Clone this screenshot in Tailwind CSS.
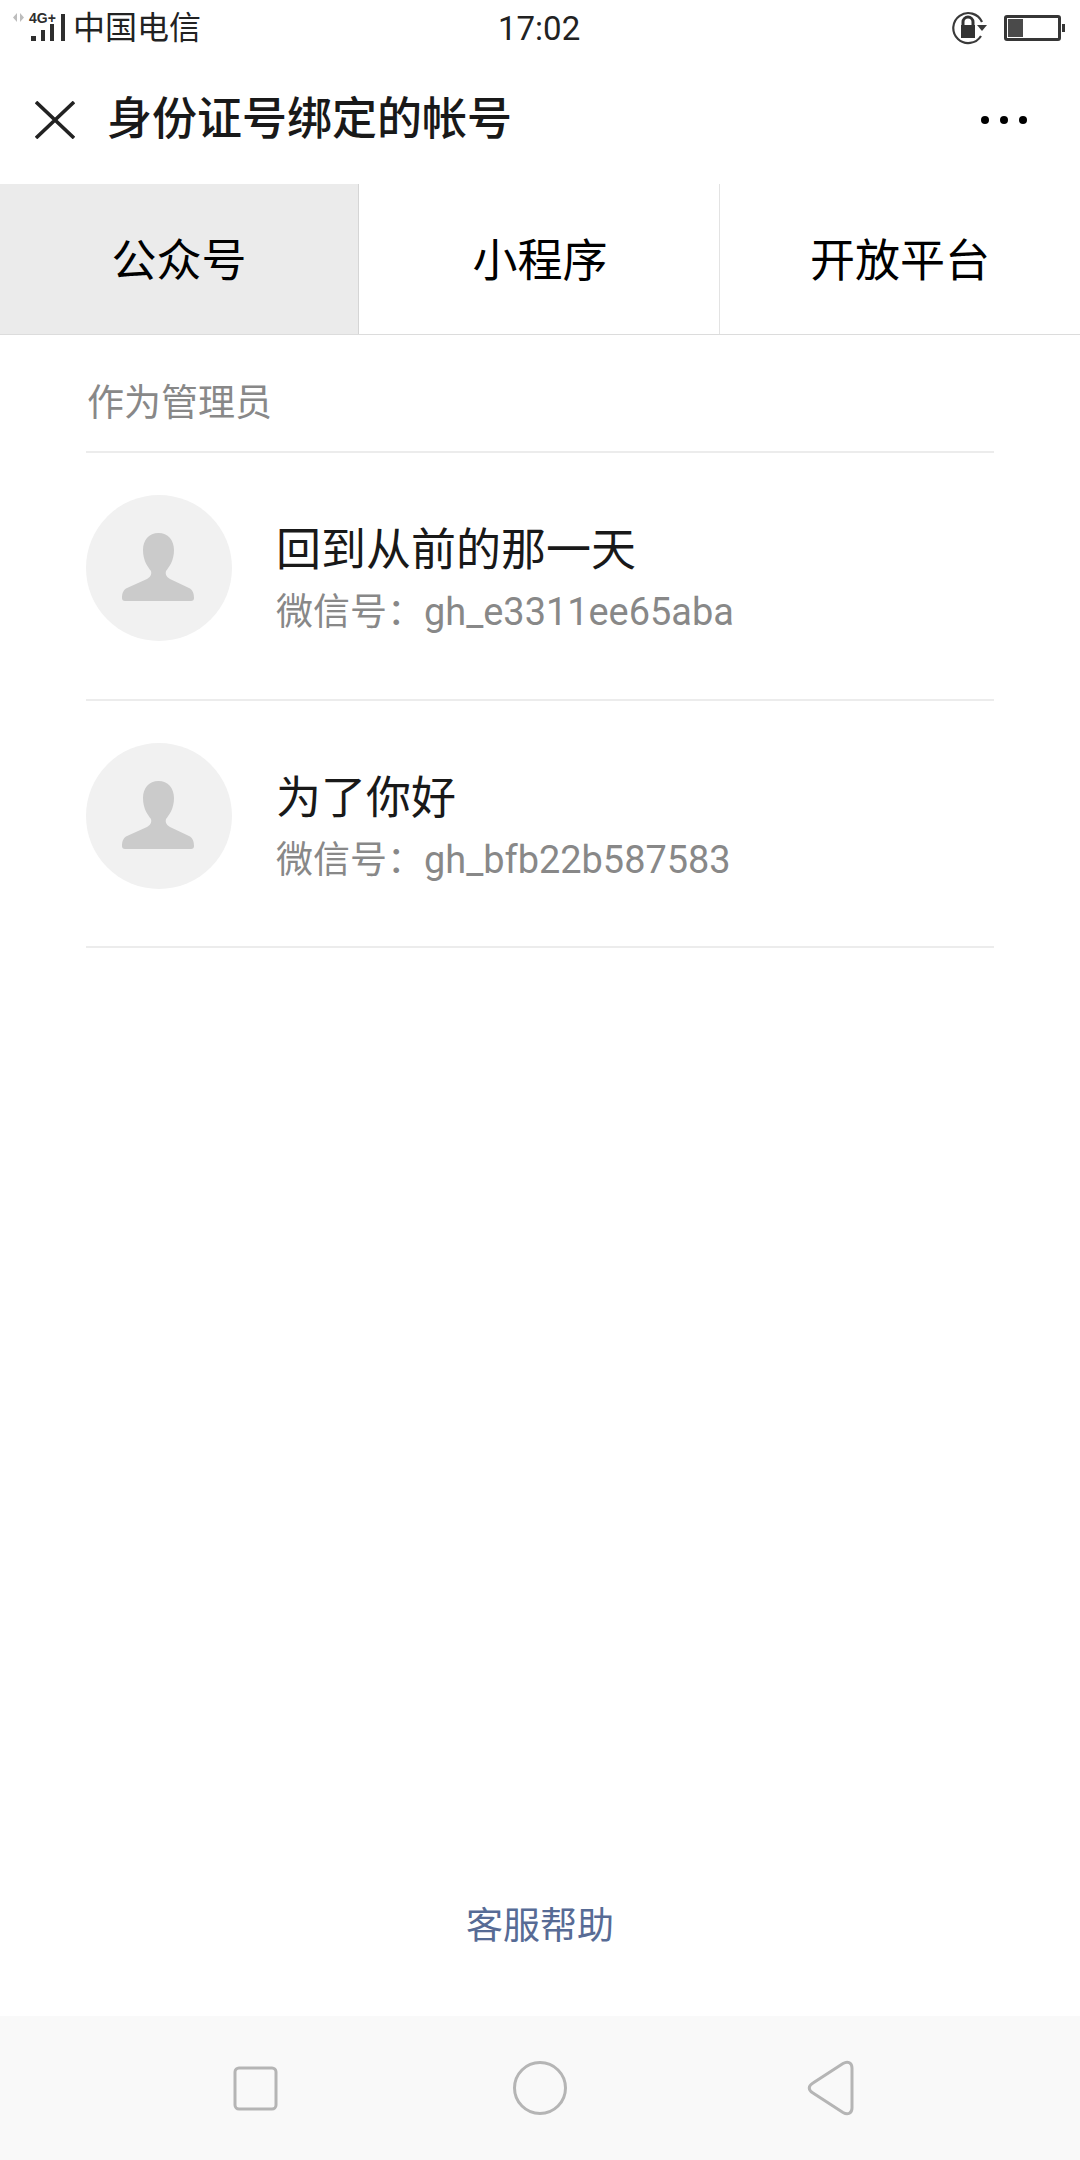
<!DOCTYPE html>
<html lang="zh-CN">
<head>
    <meta charset="UTF-8">
    <title>身份证号绑定的帐号</title>
    <script src="https://cdn.jsdelivr.net/npm/@tailwindcss/browser@4"></script>
</head>
<body class="bg-white font-['Roboto','Noto_Sans_CJK_SC',sans-serif] text-[#191919]">
<div class="w-[1080px] h-[2160px] flex flex-col overflow-hidden">

    <!-- status bar -->
    <div class="h-[56px] flex items-center justify-between relative">
        <div class="flex items-center pl-[12px]">
            <div class="relative w-[60px] h-[56px]">
                <svg class="absolute left-0 top-0" width="60" height="56" viewBox="0 0 60 56">
                    <path d="M5 13v9l-4-4.5zM8 13v9l4-4.5z" fill="#bdbdbd"/>
                    <g transform="translate(-12 0)" fill="#2e2e2e">
                        <rect x="31" y="36" width="5" height="5"/>
                        <rect x="41" y="30" width="4" height="11"/>
                        <rect x="50" y="24" width="4" height="17"/>
                        <rect x="61" y="14" width="4" height="27"/>
                    </g>
                </svg>
                <span class="absolute left-[17px] top-[11px] text-[14px] leading-[14px] font-bold font-['Liberation_Sans'] text-[#2e2e2e]">4G+</span>
            </div>
            <span class="text-[32px] leading-[40px] ml-[1px] text-[#222]">中国电信</span>
        </div>
        <span class="absolute left-[498px] top-[9px] text-[33px] leading-[40px] text-[#222]">17:02</span>
        <div class="flex items-center pr-[15px]">
            <svg width="40" height="34" viewBox="0 0 40 34" class="mr-[12px]">
                <path d="M29 25A15 15 0 1 1 30 11" fill="none" stroke="#3a3a3a" stroke-width="2.2"/>
                <path d="M25 14h10l-5 6z" fill="#3a3a3a"/>
                <path d="M11 14v-3a5 5 0 0 1 10 0v3" fill="none" stroke="#333" stroke-width="3"/>
                <rect x="9" y="14" width="14" height="13" fill="#333"/>
            </svg>
            <div class="w-[57px] h-[26px] border-[3px] border-[#363636] rounded-[3px] p-[1px]">
                <div class="w-[15px] h-full bg-[#4a4a4a]"></div>
            </div>
            <div class="w-[3px] h-[8px] bg-[#363636] ml-[1px]"></div>
        </div>
    </div>

    <!-- title bar -->
    <div class="h-[128px] flex items-center justify-between pl-[35px] pr-[53px]">
        <div class="flex items-center">
            <svg width="40" height="38" viewBox="0 0 40 38" class="mr-[32px]">
                <path d="M1 1l38 36M39 1L1 37" stroke="#222" stroke-width="3.6" fill="none"/>
            </svg>
            <h1 class="text-[45px] leading-[60px] font-medium">身份证号绑定的帐号</h1>
        </div>
        <div class="flex gap-[11px]">
            <div class="w-[8px] h-[8px] rounded-full bg-black"></div>
            <div class="w-[8px] h-[8px] rounded-full bg-black"></div>
            <div class="w-[8px] h-[8px] rounded-full bg-black"></div>
        </div>
    </div>

    <!-- tabs -->
    <div class="h-[151px] grid grid-cols-[359px_361px_1fr] border-b border-[#dcdcdc] text-[45px]">
        <div class="flex items-center justify-center bg-[#ebebeb] border-r border-[#d5d5d5] text-black pt-[5px]">公众号</div>
        <div class="flex items-center justify-center border-r border-[#e3e3e3] text-black pt-[5px] pl-[2px]">小程序</div>
        <div class="flex items-center justify-center text-black pt-[5px]">开放平台</div>
    </div>

    <!-- list -->
    <div class="flex-1 px-[86px] flex flex-col">
        <div class="h-[118px] border-b-2 border-[#ececec] pl-[1px] pt-[44px] text-[37px] leading-[50px] text-[#888]">作为管理员</div>

        <div class="h-[248px] border-b-2 border-[#ececec] flex pt-[42px]">
            <div class="w-[146px] h-[146px] rounded-full bg-[#f1f1f1] shrink-0">
                <svg width="146" height="146" viewBox="0 0 146 146">
                    <path d="M72.5 38C82 38 88 45 88 55C88 66 83 72 80 76C79 80 81 82 84 84L103 93C107 95 108 99 108 103C108 105 107 106 105 106L39 106C37 106 36 105 36 103C36 99 37 95 41 93L61 84C64 82 66 80 65 76C62 72 57 66 57 55C57 45 63 38 72.5 38Z" fill="#cbcbcb"/>
                </svg>
            </div>
            <div class="ml-[44px] pt-[26px]">
                <div class="text-[45px] leading-[60px] text-[#191919]">回到从前的那一天</div>
                <div class="text-[37px] leading-[50px] mt-[6px] text-[#888]">微信号：<span class="text-[37.9px]">gh_e3311ee65aba</span></div>
            </div>
        </div>

        <div class="h-[247px] border-b-2 border-[#ececec] flex pt-[42px]">
            <div class="w-[146px] h-[146px] rounded-full bg-[#f1f1f1] shrink-0">
                <svg width="146" height="146" viewBox="0 0 146 146">
                    <path d="M72.5 38C82 38 88 45 88 55C88 66 83 72 80 76C79 80 81 82 84 84L103 93C107 95 108 99 108 103C108 105 107 106 105 106L39 106C37 106 36 105 36 103C36 99 37 95 41 93L61 84C64 82 66 80 65 76C62 72 57 66 57 55C57 45 63 38 72.5 38Z" fill="#cbcbcb"/>
                </svg>
            </div>
            <div class="ml-[44px] pt-[26px]">
                <div class="text-[45px] leading-[60px] text-[#191919]">为了你好</div>
                <div class="text-[37px] leading-[50px] mt-[6px] text-[#888]">微信号：<span class="text-[37.9px]">gh_bfb22b587583</span></div>
            </div>
        </div>
    </div>

    <!-- footer link -->
    <div class="h-[180px] flex items-center justify-center text-[37px] text-[#576b95] pt-[2px]">客服帮助</div>

    <!-- android nav bar -->
    <div class="h-[144px] bg-[#f9f9f9] relative shrink-0">
        <svg class="absolute left-0 top-0" width="1080" height="144" viewBox="0 0 1080 144">
            <g fill="none" stroke="#b5b5b5" stroke-width="3">
                <rect x="235" y="52" width="41" height="41" rx="4"/>
                <circle cx="540" cy="72" r="25.5"/>
                <path d="M813 67L843 47.5C848 44.5 852 47 852 52V92C852 97 848 99.5 843 96.5L813 77C808 74 808 70 813 67Z" />
            </g>
        </svg>
    </div>
</div>
</body>
</html>
